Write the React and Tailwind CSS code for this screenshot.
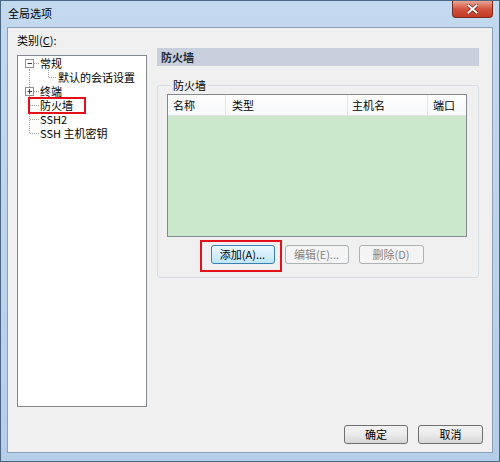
import React from 'react'

const font = { fontFamily: '"Noto Sans CJK SC", "Noto Sans", sans-serif' }

function Expander({ open, line }) {
  // tree gutter drawing for a top-level row
  return (
    <svg width="22" height="14" className="shrink-0">
      {line === 'down' && <line x1="11.5" y1="7" x2="11.5" y2="14" stroke="#a0a0a0" strokeDasharray="1 1" />}
      {line === 'full' && <line x1="11.5" y1="0" x2="11.5" y2="14" stroke="#a0a0a0" strokeDasharray="1 1" />}
      <line x1="16" y1="7.5" x2="21" y2="7.5" stroke="#a0a0a0" strokeDasharray="1 1" />
      <rect x="7.5" y="3.5" width="8" height="8" fill="#fff" stroke="#919191" />
      <line x1="9.5" y1="7.5" x2="14" y2="7.5" stroke="#3f3f3f" />
      {!open && <line x1="11.5" y1="5" x2="11.5" y2="10" stroke="#3f3f3f" />}
    </svg>
  )
}

function Leaf({ last }) {
  return (
    <svg width="22" height="14" className="shrink-0">
      <line x1="11.5" y1="0" x2="11.5" y2={last ? 7 : 14} stroke="#a0a0a0" strokeDasharray="1 1" />
      <line x1="12" y1="7.5" x2="21" y2="7.5" stroke="#a0a0a0" strokeDasharray="1 1" />
    </svg>
  )
}

function ChildLeaf() {
  return (
    <svg width="40" height="14" className="shrink-0">
      <line x1="11.5" y1="0" x2="11.5" y2="14" stroke="#a0a0a0" strokeDasharray="1 1" />
      <line x1="30.5" y1="0" x2="30.5" y2="7" stroke="#a0a0a0" strokeDasharray="1 1" />
      <line x1="31" y1="7.5" x2="39" y2="7.5" stroke="#a0a0a0" strokeDasharray="1 1" />
    </svg>
  )
}

function Button({ children, disabled, focused, className = '' }) {
  const look = disabled
    ? 'border-[#adb2b5] bg-[#f4f4f4] text-[#838383]'
    : focused
      ? 'border-[#3c7fb1] bg-gradient-to-b from-[#eaf6fd] to-[#bee6fd] text-black'
      : 'border-[#707070] bg-gradient-to-b from-[#f2f2f2] via-[#ebebeb] to-[#d6d6d6] text-black'
  return (
    <div className={`h-[19px] flex items-center justify-center rounded-[3px] border text-[11px] leading-[13px] ${look} ${className}`}>
      {children}
    </div>
  )
}

export default function App() {
  return (
    <div style={font} className="w-[500px] h-[462px] flex flex-col border border-[#4a6682] bg-gradient-to-b from-[#c3d9f0] to-[#b6cee8] text-black overflow-hidden">
      {/* Title bar */}
      <div className="h-[26px] flex items-start shrink-0">
        <div className="pl-[7px] pt-[5px] text-[11px] leading-[14px]">全局选项</div>
        <div className="ml-auto mr-[6px] w-[41px] h-[17px] flex items-center justify-center rounded-b-[4px] border border-t-0 border-[#7a2b20] bg-gradient-to-b from-[#e8a597] via-[#d2533e] to-[#c23a22]">
          <svg width="11" height="10" viewBox="0 0 11 10">
            <path d="M1.5 1.5 L9.5 8.5 M9.5 1.5 L1.5 8.5" stroke="#5a1a10" strokeWidth="3.2" strokeLinecap="square" />
            <path d="M1.5 1.5 L9.5 8.5 M9.5 1.5 L1.5 8.5" stroke="#ffffff" strokeWidth="2" strokeLinecap="square" />
          </svg>
        </div>
      </div>

      {/* Client area */}
      <div className="mx-[6px] h-[426px] shrink-0 border border-[#8aa0b8] bg-[#f0f0f0] flex flex-col">
        <div className="flex items-start">
          {/* Category tree */}
          <div className="pl-[9px] pt-[5px] flex flex-col">
            <div className="h-[14px] text-[11px] leading-[14px] mb-[8px]">类别(<span className="underline">C</span>):</div>
            <div className="w-[130px] h-[352px] border border-[#828790] bg-white text-[11px] leading-[14px]">
              <div className="flex items-center h-[14px]">
                <Expander open line="down" />
                <span>常规</span>
              </div>
              <div className="flex items-center h-[14px]">
                <ChildLeaf />
                <span>默认的会话设置</span>
              </div>
              <div className="flex items-center h-[14px]">
                <Expander line="full" />
                <span>终端</span>
              </div>
              <div className="relative flex items-center h-[14px]">
                <Leaf />
                <span>防火墙</span>
                <div className="absolute left-[10px] -top-[1px] w-[58px] h-[17px] border-2 border-[#e3101a]" />
              </div>
              <div className="flex items-center h-[14px]">
                <Leaf />
                <span>SSH2</span>
              </div>
              <div className="flex items-center h-[14px]">
                <Leaf last />
                <span>SSH 主机密钥</span>
              </div>
            </div>
          </div>

          {/* Right page */}
          <div className="ml-[10px] mt-[20px] w-[322px] flex flex-col">
            <div className="h-[18px] bg-[#c7d0dc] pl-[4px] text-[11px] leading-[18px] font-bold text-[#1e2a38]">防火墙</div>
            <fieldset className="mt-[12px] border border-[#d5dfe5] rounded-[3px] pl-[9px] pr-[11px] pb-[13px]">
              <legend className="ml-[4px] px-[2px] text-[11px] leading-[14px]">防火墙</legend>
              <div className="mt-[2px] h-[143px] border border-[#828790] bg-[#cce8cc] flex flex-col">
                <div className="h-[21px] bg-gradient-to-b from-white to-[#f6f7f8] border-b border-[#e2e5e8] flex text-[11px] leading-[20px]">
                  <div className="w-[58px] pl-[5px] border-r border-[#e5e5e5]">名称</div>
                  <div className="w-[122px] pl-[6px] border-r border-[#e5e5e5]">类型</div>
                  <div className="w-[80px] pl-[4px] border-r border-[#e5e5e5]">主机名</div>
                  <div className="flex-1 pl-[5px]">端口</div>
                </div>
              </div>
              <div className="mt-[8px] flex justify-center gap-[10px]">
                <div className="relative">
                  <Button focused className="w-[64px]">添加(A)...</Button>
                  <div className="absolute -left-[11px] -top-[5px] w-[82px] h-[32px] border-2 border-[#e3101a]" />
                </div>
                <Button disabled className="w-[64px]">编辑(E)...</Button>
                <Button disabled className="w-[65px]">删除(D)</Button>
              </div>
            </fieldset>
          </div>
        </div>

        {/* Bottom buttons */}
        <div className="mt-auto mb-[8px] pr-[9px] flex justify-end gap-[10px]">
          <Button className="w-[64px]">确定</Button>
          <Button className="w-[65px]">取消</Button>
        </div>
      </div>
    </div>
  )
}
